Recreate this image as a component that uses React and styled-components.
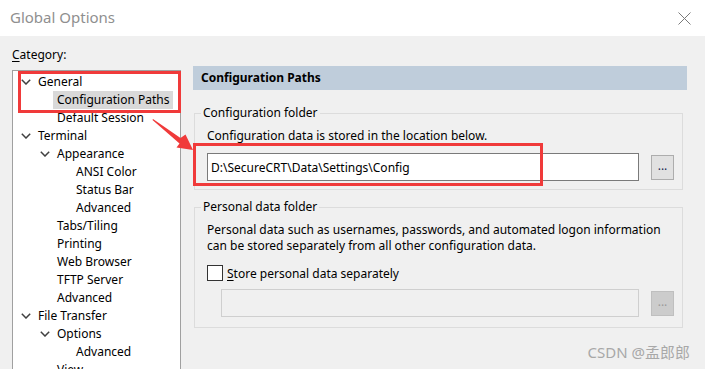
import React from "react";
import styled, { createGlobalStyle } from "styled-components";

const Global = createGlobalStyle`
  html, body { margin: 0; padding: 0; background: #f0f0f0; }
  body { font-family: "Noto Sans", "Open Sans", sans-serif; }
  #root { width: 705px; height: 369px; }
`;

const Window = styled.div`
  position: relative;
  width: 705px;
  height: 369px;
  overflow: hidden;
  background: #f0f0f0;
  font-size: 12px;
  color: #000;
  display: flex;
  flex-direction: column;
`;

const TitleBar = styled.div`
  height: 36px;
  flex: none;
  background: #fff;
  display: flex;
  align-items: center;
  justify-content: space-between;
  padding: 0 14px 0 10px;
`;

const Title = styled.div`
  font-size: 15px;
  color: #8f8f8f;
  margin-top: -2px;
`;

const CloseIcon = () => (
  <svg width="13" height="13" viewBox="0 0 13 13">
    <path d="M0.5 0.5 L12.5 12.5 M12.5 0.5 L0.5 12.5" stroke="#7a7a7a" strokeWidth="1" fill="none" />
  </svg>
);

const Body = styled.div`
  flex: 1;
  display: flex;
  min-height: 0;
`;

const LeftCol = styled.div`
  width: 169px;
  padding: 11px 0 0 12px;
  display: flex;
  flex-direction: column;
  flex: none;
`;

const Label = styled.div`
  height: 16px;
  line-height: 16px;
  margin-bottom: 7px;
  u { text-decoration: underline; text-underline-offset: 2px; }
`;

const TreeBox = styled.div`
  flex: 1;
  background: #fff;
  border: 1px solid #a0a0a0;
  border-bottom: none;
  padding-top: 2px;
`;

const Row = styled.div`
  height: 18px;
  display: flex;
  align-items: center;
  padding-left: ${(p) => 4 + p.$level * 19}px;
`;

const Chev = styled.div`
  width: 17px;
  height: 18px;
  display: flex;
  align-items: center;
  justify-content: flex-start;
  padding-left: 4px;
  box-sizing: border-box;
`;

const ItemLabel = styled.span`
  padding: 0 4px;
  height: 18px;
  line-height: 18px;
  white-space: nowrap;
  background: ${(p) => (p.$selected ? "#d9d9d9" : "transparent")};
`;

const ChevronIcon = () => (
  <svg width="10" height="6" viewBox="0 0 10 6">
    <path d="M0.8 0.8 L5 5 L9.2 0.8" stroke="#404040" strokeWidth="1.5" fill="none" />
  </svg>
);

const RightCol = styled.div`
  flex: none;
  width: 494px;
  margin-left: 12px;
  padding-top: 30px;
  display: flex;
  flex-direction: column;
`;

const Header = styled.div`
  height: 24px;
  background: #bfcddb;
  font-weight: bold;
  line-height: 24px;
  padding-left: 8px;
  margin-bottom: 15px;
`;

const Group = styled.fieldset`
  margin: 0 4px ${(p) => p.$mb || 0}px 1px;
  border: 1px solid #dcdcdc;
  padding: 7px 8px ${(p) => p.$pb}px 12px;
  min-width: 0;
`;

const Legend = styled.legend`
  padding: 0 2px;
  margin-left: -6px;
  height: 16px;
  line-height: 16px;
`;

const Text = styled.div`
  line-height: 16px;
`;

const FieldRow = styled.div`
  display: flex;
  align-items: center;
  margin-top: ${(p) => p.$mt}px;
  padding-left: ${(p) => p.$indent || 0}px;
`;

const Input = styled.div`
  flex: 1;
  height: 28px;
  box-sizing: border-box;
  border: 1px solid ${(p) => (p.$disabled ? "#cfcfcf" : "#7a7a7a")};
  background: ${(p) => (p.$disabled ? "#f0f0f0" : "#fff")};
  display: flex;
  align-items: center;
  padding-left: 3px;
  white-space: nowrap;
`;

const Browse = styled.div`
  width: 23px;
  height: 25px;
  box-sizing: border-box;
  margin-left: 12px;
  border: 1px solid ${(p) => (p.$disabled ? "#bfbfbf" : "#adadad")};
  background: ${(p) => (p.$disabled ? "#cccccc" : "#e1e1e1")};
  color: ${(p) => (p.$disabled ? "#9a9a9a" : "#1a2a50")};
  display: flex;
  align-items: center;
  justify-content: center;
  font-size: 12px;
  line-height: 1;
  padding-bottom: 2px;
`;

const CheckRow = styled.div`
  display: flex;
  align-items: center;
  height: 20px;
  margin-top: 9px;
  u { text-decoration: underline; text-underline-offset: 2px; }
`;

const Box = styled.div`
  width: 16px;
  height: 16px;
  box-sizing: border-box;
  border: 1px solid #333;
  background: #fff;
  margin-right: 4px;
`;

const Annot = styled.div`
  position: absolute;
  border: 3px solid #f03a3a;
  box-sizing: border-box;
  pointer-events: none;
`;

const ArrowSvg = styled.svg`
  position: absolute;
  left: 0;
  top: 0;
  pointer-events: none;
`;

const Watermark = styled.div`
  position: absolute;
  right: 15px;
  bottom: 7px;
  color: #a8a8a8;
  font-size: 15px;
  font-family: "Noto Sans", "Noto Sans CJK SC", sans-serif;
`;

const tree = [
  { t: "General", l: 0, c: true },
  { t: "Configuration Paths", l: 1, s: true },
  { t: "Default Session", l: 1 },
  { t: "Terminal", l: 0, c: true },
  { t: "Appearance", l: 1, c: true },
  { t: "ANSI Color", l: 2 },
  { t: "Status Bar", l: 2 },
  { t: "Advanced", l: 2 },
  { t: "Tabs/Tiling", l: 1 },
  { t: "Printing", l: 1 },
  { t: "Web Browser", l: 1 },
  { t: "TFTP Server", l: 1 },
  { t: "Advanced", l: 1 },
  { t: "File Transfer", l: 0, c: true },
  { t: "Options", l: 1, c: true },
  { t: "Advanced", l: 2 },
  { t: "View", l: 1 },
];

export default function App() {
  return (
    <Window>
      <Global />
      <TitleBar>
        <Title>Global Options</Title>
        <CloseIcon />
      </TitleBar>
      <Body>
        <LeftCol>
          <Label>
            <u>C</u>ategory:
          </Label>
          <TreeBox>
            {tree.map((it, i) => (
              <Row key={i} $level={it.l}>
                <Chev>{it.c ? <ChevronIcon /> : null}</Chev>
                <ItemLabel $selected={it.s}>{it.t}</ItemLabel>
              </Row>
            ))}
          </TreeBox>
        </LeftCol>
        <RightCol>
          <Header>Configuration Paths</Header>
          <Group $pb={8} $mb={9}>
            <Legend>Configuration folder</Legend>
            <Text>Configuration data is stored in the location below.</Text>
            <FieldRow $mt={9}>
              <Input>D:\SecureCRT\Data\Settings\Config</Input>
              <Browse>...</Browse>
            </FieldRow>
          </Group>
          <Group $pb={10}>
            <Legend>Personal data folder</Legend>
            <Text>
              Personal data such as usernames, passwords, and automated logon information
              <br />
              can be stored separately from all other configuration data.
            </Text>
            <CheckRow>
              <Box />
              <span>
                <u>S</u>tore personal data separately
              </span>
            </CheckRow>
            <FieldRow $mt={6} $indent={14}>
              <Input $disabled />
              <Browse $disabled>...</Browse>
            </FieldRow>
          </Group>
        </RightCol>
      </Body>
      <Annot style={{ left: 18, top: 71, width: 163, height: 42 }} />
      <Annot style={{ left: 193, top: 143, width: 350, height: 43 }} />
      <ArrowSvg width="705" height="369" viewBox="0 0 705 369">
        <polygon
          points="153,119 180.5,138 185.5,134.5 193,150 176.5,147.5 179.5,143.5 152.5,120"
          fill="#f03a3a"
        />
      </ArrowSvg>
      <Watermark>CSDN @孟郎郎</Watermark>
    </Window>
  );
}
